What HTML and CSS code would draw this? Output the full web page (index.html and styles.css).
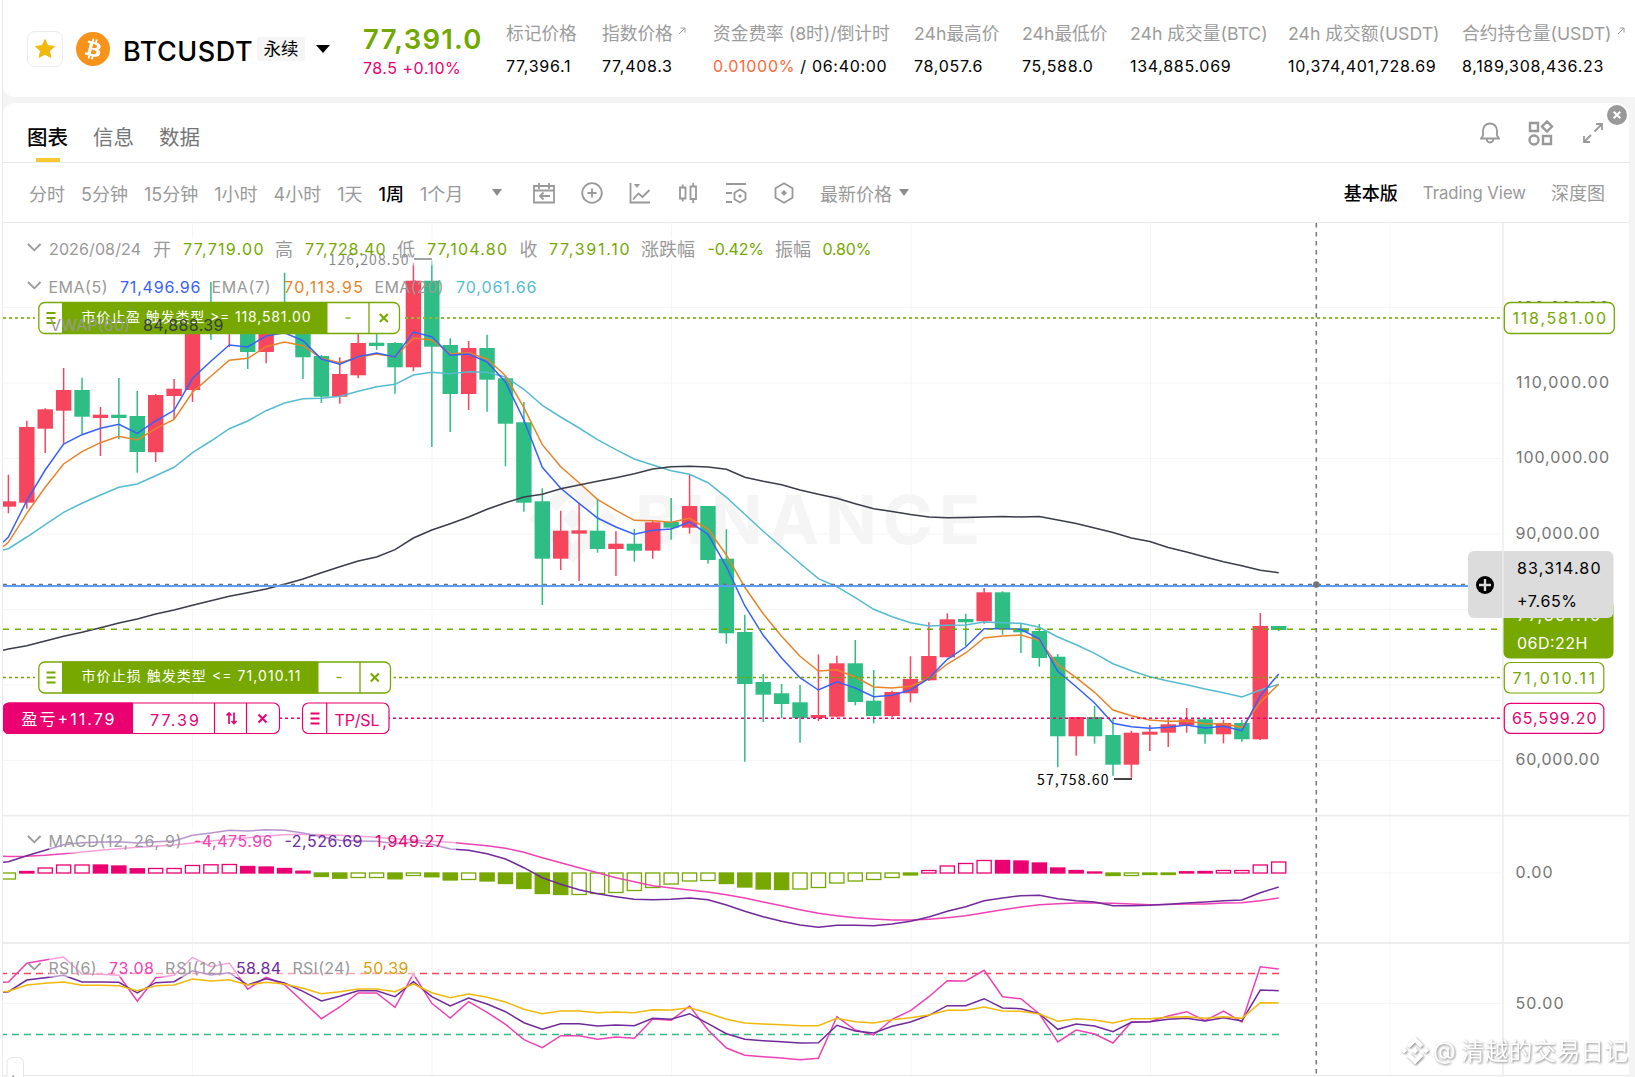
FILE: index.html
```html
<!DOCTYPE html>
<html lang="zh-CN">
<head>
  <meta charset="UTF-8" />
  <meta name="viewport" content="width=device-width, initial-scale=1.0" />
  <title>BTCUSDT 永续</title>
  <link rel="stylesheet" href="styles.css">
</head>
<body>
  <div class="page">

    <header class="ticker">
      <button class="star">
        <svg width="22" height="22" viewBox="0 0 22 22"><path d="M11 1.600l2.800 6 6.600.8-4.900 4.500 1.300 6.500-5.800-3.200-5.800 3.200 1.300-6.500L1.600 8.400l6.600-.8z" fill="#f0b90b" stroke="#f0b90b" stroke-linejoin="round"/></svg>
      </button>
      <svg class="coin" width="34" height="34" viewBox="0 0 32 32">
        <circle cx="16" cy="16" r="16" fill="#f7931a"/>
        <path fill="#fff" d="M23.189 14.020c.314-2.096-1.283-3.223-3.465-3.975l.708-2.840-1.728-.43-.690 2.765c-.454-.114-.920-.220-1.385-.326l.695-2.783L15.596 6l-.708 2.839c-.376-.086-.746-.170-1.104-.260l.002-.009-2.384-.595-.460 1.846s1.283.294 1.256.312c.700.175.826.638.805 1.006l-.806 3.235c.048.012.110.030.180.057l-.183-.045-1.130 4.532c-.086.212-.303.531-.793.410.018.025-1.256-.313-1.256-.313l-.858 1.978 2.250.561c.418.105.828.215 1.231.318l-.715 2.872 1.727.430.708-2.840c.472.127.930.245 1.378.357l-.706 2.828 1.728.430.715-2.866c2.948.558 5.164.333 6.097-2.333.752-2.146-.037-3.385-1.588-4.192 1.130-.260 1.980-1.003 2.207-2.538zm-3.950 5.538c-.533 2.147-4.148.986-5.320.695l.950-3.805c1.172.293 4.929.872 4.370 3.110zm.535-5.569c-.487 1.953-3.495.960-4.470.717l.860-3.450c.975.243 4.118.696 3.610 2.733z"/>
      </svg>
      <h1>BTCUSDT</h1>
      <span class="badge">永续</span>
      <span class="caret caret-dark"></span>
      <div class="last">
        <strong>77,391.0</strong>
        <span>78.5 +0.10%</span>
      </div>
      <dl class="stats">
        <div><dt>标记价格</dt><dd>77,396.1</dd></div>
        <div><dt>指数价格<svg class="ext" viewBox="0 0 8 8"><path d="M1 7L7 1M2.500 1H7V5.500"/></svg></dt><dd>77,408.3</dd></div>
        <div><dt>资金费率 (8时)/倒计时</dt><dd><em>0.01000%</em> / 06:40:00</dd></div>
        <div><dt>24h最高价</dt><dd>78,057.6</dd></div>
        <div><dt>24h最低价</dt><dd>75,588.0</dd></div>
        <div><dt>24h 成交量(BTC)</dt><dd>134,885.069</dd></div>
        <div><dt>24h 成交额(USDT)</dt><dd>10,374,401,728.69</dd></div>
        <div><dt>合约持仓量(USDT)<svg class="ext" viewBox="0 0 8 8"><path d="M1 7L7 1M2.500 1H7V5.500"/></svg></dt><dd>8,189,308,436.23</dd></div>
      </dl>
    </header>

    <main class="panel">
      <button class="close"><svg width="20" height="20" viewBox="0 0 20 20"><circle cx="10" cy="10" r="10" fill="#999"/><path d="M6.700 6.700l6.600 6.600M13.300 6.700l-6.600 6.600" stroke="#fff" stroke-width="2"/></svg></button>
      <nav class="tabs">
        <a class="active">图表</a>
        <a>信息</a>
        <a>数据</a>
        <div class="tools">
          <svg width="20" height="22" viewBox="0 0 20 22"><path d="M1 16.500h18l-2-3V8.500C17 4.500 14 1.500 10 1.500S3 4.500 3 8.500v5zM6.500 17c.3 2.300 1.700 3.500 3.500 3.500s3.200-1.200 3.500-3.500"/></svg>
          <svg width="26" height="26" viewBox="0 0 26 26" class="thick"><path d="M2 3h8v8H2zM19 1.500l5 5-5 5-5-5zM15 16h8v8h-8z"/><circle cx="6" cy="20" r="4.500"/></svg>
          <svg width="22" height="22" viewBox="0 0 22 22"><path d="M14 2h6v6M20 2l-7.500 7.500M8 20H2v-6M2 20l7-7"/></svg>
        </div>
      </nav>

      <div class="toolbar">
        <div class="intervals">
          <a>分时</a><a>5分钟</a><a>15分钟</a><a>1小时</a><a>4小时</a><a>1天</a><a class="active">1周</a><a>1个月</a>
        </div>
        <span class="caret"></span>
        <div class="icons">
          <svg viewBox="0 0 22 22"><path d="M1 4h20v16.500H1zM1 8.500h20M6 1v6M16 1v6M17 14H7M10.500 10.500L7 14l3.500 3.500"/></svg>
          <svg viewBox="0 0 22 22"><circle cx="11" cy="11" r="9.800"/><path d="M11 6.500v9M6.500 11h9"/></svg>
          <svg viewBox="0 0 22 22"><path d="M1.500 1v19.500H21M4 17.500l5.500-6 4 3.500L20.500 8"/><path class="fill" d="M5 2h6L8 6z"/></svg>
          <svg viewBox="0 0 22 22"><path d="M3 5.500h5.500v11H3zM13.500 4.500H19v12.500h-5.500zM5.700 2.500v3M5.700 16.500v3M16.200 1v3.500M16.200 17v4"/></svg>
          <svg viewBox="0 0 22 22"><path d="M1 2h20M1 11h6M1 20h6M15 7.500l5.500 3.200v6.600L15 20.500l-5.500-3.200v-6.600z"/><circle class="fill" cx="15" cy="14" r="1.600"/></svg>
          <svg viewBox="0 0 22 22"><path d="M11 1.300l8.500 4.900v9.600L11 20.700l-8.500-4.900V6.200z"/><path class="fill" d="M11 8l3 3-3 3-3-3z"/></svg>
        </div>
        <span class="price-type">最新价格</span>
        <span class="caret"></span>
        <div class="views">
          <a class="active">基本版</a><a class="tv">Trading View</a><a>深度图</a>
        </div>
      </div>

      <svg id="chart" width="1626" height="854" viewBox="3 223 1626 854"></svg>
    </main>
  </div>

  <script src="chart.js"></script>
</body>
</html>
```
FILE: styles.css
```css
* {
  box-sizing: border-box;
}
body {
  margin: 0;
  background: #fff;
  color: #000;
  font-family: Inter, "Noto Sans CJK SC", sans-serif;
  overflow: hidden;
}
button {
  background: none;
  border: none;
  padding: 0;
}
.page {
  margin-left: 2px;
  height: 1077px;
  border-left: 1px solid #eaeaea;
  background: #f4f4f4;
}

/* ticker */
.ticker {
  display: flex;
  align-items: center;
  height: 97px;
  padding-left: 24px;
  background: #fff;
  border-radius: 0 0 0 12px;
}
.star {
  width: 36px;
  height: 36px;
  border: 1px solid #ececec;
  border-radius: 8px;
  display: flex;
  align-items: center;
  justify-content: center;
}
.coin {
  margin-left: 13px;
}
.coin + h1 {
  margin: 6px 0 0 13px;
  width: 133px;
  font-size: 27px;
  font-weight: 500;
  letter-spacing: 0.5px;
  line-height: 32px;
}
.badge {
  width: 48px;
  height: 24px;
  margin-left: 1px;
  background: #f5f5f5;
  border-radius: 3px;
  font-size: 17.5px;
  line-height: 23px;
  text-align: center;
}
.caret {
  border: 5.5px solid transparent;
  border-top: 7px solid #8c8c8c;
  border-bottom: none;
}
.caret-dark {
  border-width: 8px 7px 0;
  border-top-color: #000;
  margin-left: 11px;
}
.last {
  width: 143px;
  margin-left: 33px;
  padding-top: 6px;
}
.last strong {
  display: block;
  color: #70a800;
  font-size: 27.5px;
  font-weight: 600;
  letter-spacing: 1.25px;
  line-height: 32px;
}
.last span {
  display: block;
  color: #ea0070;
  font-size: 16px;
  letter-spacing: 0.5px;
  line-height: 26px;
  white-space: nowrap;
}
.stats {
  display: grid;
  grid-template-columns: 96px 111px 201px 108px 108px 158px 174px 170px;
  margin: 0;
  padding-top: 3px;
  white-space: nowrap;
}
.stats dt {
  color: #9c9c9c;
  font-size: 17.7px;
  line-height: 26px;
}
.stats dd {
  margin: 6px 0 0;
  font-size: 16px;
  letter-spacing: 0.7px;
  line-height: 26px;
}
.stats em {
  color: #ff6838;
  font-style: normal;
}
.ext {
  width: 8px;
  height: 8px;
  margin-left: 5px;
  vertical-align: 5px;
  fill: none;
  stroke: #9c9c9c;
}

/* chart panel */
.panel {
  position: relative;
  width: 1626px;
  height: 974px;
  margin-top: 6px;
  background: #fff;
  border-radius: 12px 12px 0 0;
}
.close {
  position: absolute;
  top: 2px;
  right: 2px;
  width: 20px;
  height: 20px;
}
.close svg {
  display: block;
}
.tabs {
  display: flex;
  height: 60px;
  padding-left: 24px;
  gap: 25px;
  border-bottom: 1px solid #eaeaea;
}
.tabs a {
  width: 41px;
  color: #757575;
  font-size: 20.5px;
  line-height: 70px;
}
.tabs .active {
  color: #000;
  font-weight: 500;
  background: linear-gradient(#f8c933, #f8c933) center bottom / 24px 4px no-repeat;
}
.tools {
  display: flex;
  align-items: center;
  gap: 28px;
  margin: 0 25px 0 auto;
}
.tools svg {
  fill: none;
  stroke: #999;
  stroke-width: 1.8;
}
.tools .thick {
  stroke-width: 2.4;
}
.toolbar {
  display: flex;
  align-items: center;
  height: 60px;
  padding: 0 24px 0 26px;
  border-bottom: 1px solid #eaeaea;
  color: #999;
  font-size: 18px;
}
.intervals {
  display: flex;
  gap: 16px;
  width: 463px;
  white-space: nowrap;
}
.toolbar .active {
  color: #000;
  font-weight: 500;
}
.icons {
  display: flex;
  gap: 26px;
  margin: 0 25px 0 31px;
}
.icons svg {
  width: 22px;
  height: 22px;
  fill: none;
  stroke: #999;
  stroke-width: 1.8;
}
.icons .fill {
  fill: #999;
  stroke: none;
}
.price-type {
  width: 79px;
}
.views {
  display: flex;
  gap: 25px;
  margin-left: auto;
}
.views .tv {
  font-size: 16.7px;
  line-height: 28px;
}

/* chart */
#chart {
  display: block;
  font-size: 16px;
}
#chart .mark {
  font-family: "Noto Sans CJK SC", sans-serif;
  font-size: 14px;
}
#chart .brand {
  font-size: 68px;
  font-weight: 700;
}
#chart .sign {
  font-size: 23.5px;
  filter: drop-shadow(1px 1px 1px #888);
}
#chart .small {
  font-size: 14px;
}
#chart .cjk {
  font-size: 18px;
}
```
FILE: chart.js
```js
const chart = document.getElementById("chart");
const UP = "#f6465d", DOWN = "#2ebd85", GREEN = "#76a800", PINK = "#ea0070";
const LEFT = 3, AXIS = 1503;
const X0 = 8.4, STEP = 18.41;
const px = i => X0 + i * STEP;

let out = "";
const rect = (x, y, w, h, fill, extra = "") => out += `<rect x="${x}" y="${y}" width="${w}" height="${h}" fill="${fill}" ${extra}/>`;
const line = (x1, y1, x2, y2, color, w = 1, dash = "") => out += `<path d="M${x1} ${y1}L${x2} ${y2}" stroke="${color}" stroke-width="${w}" stroke-dasharray="${dash}" fill="none"/>`;
const path = (d, color, w = 1.5, fill = "none") => out += `<path d="${d}" stroke="${color}" stroke-width="${w}" fill="${fill}"/>`;
// text between two x positions
const text = (x1, x2, y, str, color, cls = "") => out += `<text x="${x1}" y="${y}" fill="${color}" class="${cls}" textLength="${x2 - x1}">${str.replace(/</g, "&lt;")}</text>`;

function series(start, ys, color, w = 1.5) {
  const pts = ys.map((y, i) => `${px(i).toFixed(1)} ${y}`);
  path(`M${LEFT} ${start}L` + pts.join("L"), color, w);
}

// [direction, high, top, bottom, low]
const candles = [
  [1,474.7,501.3,506.7,513.3],[1,420.7,427,502.7,508.7],[1,408.3,409.3,428.7,453],[1,368,390,410.7,444],[0,377.7,390,416.7,434.3],
  [1,407,414.7,418,456],[0,378,414.7,418,439],[0,391,416,452,472.7],[1,394,395,452.3,462],[1,379,388.7,396,419],
  [1,318,322,390,402],[0,282,305,328,339.7],[1,306,310,330,347],[0,308,310,352,369],[1,310,315,352,363.3],
  [0,272.7,310,325,330],[0,315,320,357.3,379],[0,355,356,396.7,403],[1,357.3,374,396.7,403.7],[1,325,343,375.3,378.3],
  [0,325,342.7,346,350],[0,342,343,367.3,393.7],[1,262.7,280.7,367.3,371.3],[0,260.7,280.7,346.7,447],[0,338.3,345,394,432],
  [1,341,348,394,410],[0,334.7,348,379.7,411.7],[0,376.7,378.3,423.7,466.3],[0,402,422.3,502.7,511.7],[0,488.3,501.3,558.7,605],
  [1,510.7,530.7,558.7,570],[1,502.7,530.3,533.7,581],[0,499.3,530.7,549,552.7],[1,531.3,543.7,549,576],[0,529,543.7,550.7,561.7],
  [1,521,522.3,550.7,558.7],[0,498,522,527.7,539.7],[1,475,506,527.7,533.7],[0,506,506,560,563.7],[0,529.3,558.7,633.3,643.7],
  [0,614.7,632,684,761.7],[0,674,682,694.7,722],[0,684,693.3,704,718],[0,685,702.3,718,742.7],[1,654.3,715,718,721],
  [1,655.7,663.3,716.7,717.3],[0,640,663.3,702,705.3],[0,670,700.7,716,723.3],[1,690.7,692,716,717],[1,656.3,679,693.3,702.3],
  [1,622.3,656,680.3,681],[1,613.3,619.3,657.3,657.3],[0,613.7,619,622.3,646],[1,588,592.3,621.3,623.7],[0,591.3,592.3,629,634.7],
  [0,624,628.3,632.3,653],[0,624,631,658,666.7],[0,654,656.7,736.3,767.3],[1,717,717,736.3,755.7],[0,705.7,717,736.3,743.7],
  [0,718.3,735,764.7,775.7],[1,730.7,732.7,764.7,777.7],[1,725,731.7,734.7,751],[1,717.7,724.3,732.7,747],[1,708,719.3,725,732.7],
  [0,718,719.3,734.3,743.7],[1,719.7,723,734.3,743.3],[0,720,723,739.3,741.7],[1,613,626,739.3,740],[0,626,626,630,631]
];

const ema5 = [537,500.7,470,444,434.7,428.3,424.3,433.3,421,410.3,378.3,361.3,345,347,336,332.7,340.7,359,364.3,356.7,353,357,332,336.7,355.3,354,362,382,420,467.3,488.3,503.3,518,527,534.3,530.3,529,522,534.3,566.7,605.7,635.3,658,677.7,690,681.7,688,696.7,695.3,690,678.3,659.3,647,628.7,628.7,629.3,639,671.3,686.7,703,723.3,726.7,728.3,727.3,725,728,726.3,730.7,695.7,674];
const ema7 = [542.3,513.3,487.3,464,451.7,442.7,436.3,440,428.7,419.3,392.3,376.3,360.3,358.3,346.7,342,345.7,358.3,362.7,357.3,354,357,338.3,340,353.7,352.7,359,375.7,407.7,444.7,466.7,482.7,499.3,510.3,520.3,520.7,522.3,518.3,529,555,587.3,613.7,636.3,656.3,671,669.7,677,687,688,686.3,678.3,664,653,638,636,635,640.3,664.7,677.7,692.3,710,715.7,720,721.3,721,723.7,723.7,727.3,702.3,684.3];
const ema20 = [548.7,537,524.7,512.3,503.3,495,487.3,484,475.7,467.3,452.7,441,428.7,421,410.7,403,398.7,398.3,396.3,391.3,386.7,384.3,375,372.3,373.7,371.7,372.3,377,389.3,405.3,417,428,439.7,449.7,459,465,470.7,474.3,482.7,497.3,514.3,531.3,547.3,563.3,578.7,586.7,597.7,609.3,616.7,622.7,626,625.3,625,622,622.7,623.3,627.3,637,644.7,653.3,663.7,670.7,676.7,681,684.7,689,692.7,697,690,684.3];
const vwap = [649,645.7,641,636.3,632.3,627.7,623,619,614,610,605.3,600.7,596.3,592.7,589,584.3,579,572.7,566.7,561,557,549.7,538,530,523.7,517,509.3,502.7,497,494.3,488.7,485,481.3,477.7,473.7,469,466.7,466.3,467,469.3,477.3,481.3,484.7,490,494.3,498.3,503.7,508.7,511.5,514.5,517,517.8,517.5,517,516.5,517,516.5,520,523.5,528,532.5,538,541.5,547.5,552,557,561.7,565.7,570.3,572.7];

// [value, filled]
const macdBars = [
  [-6.5,0],[2,1],[5.5,0],[8.5,0],[8.5,0],[8.5,1],[7.5,1],[4.7,1],[5,0],[5,0],[8,0],[8.7,0],[9,0],[7,1],[6.5,1],[5,1],[2.3,1],
  [-4,1],[-5.7,1],[-5,0],[-5,0],[-6.3,1],[-3,0],[-4.3,1],[-7.5,1],[-7,0],[-8.5,1],[-11,1],[-16,1],[-21,1],[-22,1],[-22,0],[-21,0],
  [-20,0],[-18,0],[-15,0],[-11.5,0],[-8.5,0],[-8,0],[-11,1],[-14.5,1],[-16.5,1],[-17,1],[-16.5,0],[-15,0],[-10.5,0],[-8.5,0],[-7,0],[-5,0],[-2.5,1],
  [3,0],[7.5,0],[10,0],[13,0],[13,1],[12.5,1],[10.5,1],[5.5,1],[3,1],[1.5,1],[-3,1],[-3,0],[-2,1],[-2,1],[1.7,1],[2,1],[3,0],[3,0],[8.5,0],[11.5,0]
];
const dea = [856.5,856.3,855.3,853.7,852,850.3,848.7,847.3,846.3,845,843,841,839.3,837.7,836,834.7,834.3,834.7,835.3,836.3,837.3,838.7,840,841.3,842.3,844,845.7,848.3,852.3,857.7,862.7,867.7,872.7,877.7,881.7,885.7,888,890,892,894.7,898,902,905.7,909.7,913.3,915.7,917.7,919,920,920,919.3,917.7,915.7,912.7,909.7,907,904.7,903.7,903,903,903.3,904,904.7,904.5,904,904,903,902.7,900.7,898];
const dif = [861.7,855.7,850.3,844.7,842.7,842,841.7,843,841.7,841,835.3,833,830.3,831,829.7,830.3,833,836.7,840.3,841,841.3,843.7,842,844.3,849,850.3,853.7,859,867.7,877.7,884.3,889.7,893.7,896.7,899.3,899.7,899.3,898,899.7,905,911.3,916.7,921.3,925,927.3,925.3,925.3,925.7,924,921.3,917,911.3,906.7,900.7,898,895.7,895.3,898.7,900.7,902,905.7,905.7,905.3,904.3,903,902,900.7,900,892.7,887];
const rsi6 = [982,963.3,960,957,974,974.3,975.3,1001.3,977.7,975.3,957.3,966.7,963,989.3,977,984.7,1001.7,1018.7,1007,993,993,1007.3,974,1003.3,1018,1001.7,1012.3,1024.3,1039.7,1047.7,1035.7,1035.7,1039.3,1037,1038.3,1019,1020.3,1006,1030,1048,1055.3,1056.7,1058,1059.7,1058.3,1016.7,1030,1035,1019.3,1010.7,996.7,980.7,981,970.3,996.7,998.7,1014,1042,1030,1034,1043,1022,1021.7,1016,1011.7,1020.7,1011,1022,966.7,969];
const rsi12 = [991.7,980,977.7,975.3,982,982,982.3,993,982.7,981.7,970.7,975,972.7,985,978.7,983,991.3,1001,996.3,990.7,990.7,996.7,981.7,996.7,1006,998,1004,1011.7,1022.7,1029.3,1023.7,1023.7,1026,1025,1025.7,1018.3,1019.3,1013.7,1023.7,1033.7,1039.3,1040.7,1041.7,1043,1042.7,1025.3,1031,1033,1026.3,1022,1015.3,1005.7,1005.7,998.7,1008,1008.7,1013.7,1029.3,1024,1026,1031.7,1022.3,1021.7,1019.3,1018.3,1021,1017.7,1021,990,990.7];
const rsi24 = [991.3,985,983.3,982,985.3,985.3,985.7,990.7,985.7,985,979,981,979.7,985,982.3,984,988.3,993.7,991.7,989,989,991.7,984,992.7,997.7,994,997.3,1002,1009.3,1013.7,1011,1011,1012.7,1012,1012.7,1009.7,1010,1007.7,1013,1019.3,1023,1024,1024.7,1025.7,1025.7,1018.3,1021.7,1023,1019.7,1017.7,1015,1010.3,1010.3,1007,1011,1011.3,1014,1021.3,1018.7,1020,1023,1018.7,1018.7,1017.3,1016.7,1018.3,1016.7,1018.3,1002.7,1003];

// grid
[307.5, 383, 458.5, 534, 609.5, 685, 760.5, 873, 1003.5].forEach(y => line(LEFT, y, AXIS, y, "#f5f5f5"));
[192.5, 432, 671.5, 911, 1150.5, 1390].forEach(x => line(x, 223, x, 1075, "#f5f5f5"));

// brand mark behind candles
function logo(cx, cy, r, fill) {
  const d = (x, y, s) => `M${x} ${y - s}L${x + s} ${y}L${x} ${y + s}L${x - s} ${y}Z`;
  const s = r * 0.22, k = r * 0.6;
  out += `<path fill="${fill}" d="${d(cx, cy, s * 1.1)}${d(cx - r + s, cy, s)}${d(cx + r - s, cy, s)}
    M${cx} ${cy - r}L${cx + k} ${cy - r + k}L${cx + k - s} ${cy - r + k + s}L${cx} ${cy - r + 2 * s}L${cx - k + s} ${cy - r + k + s}L${cx - k} ${cy - r + k}Z
    M${cx} ${cy + r}L${cx + k} ${cy + r - k}L${cx + k - s} ${cy + r - k - s}L${cx} ${cy + r - 2 * s}L${cx - k + s} ${cy + r - k - s}L${cx - k} ${cy + r - k}Z"/>`;
}
logo(573, 519, 44, "#f5f5f5");
text(635, 980, 543.5, "BINANCE", "#f5f5f5", "brand");

candles.forEach(([up, h, t, b, l], i) => {
  const c = up ? UP : DOWN, x = px(i);
  line(x, h, x, l, c, 1.5);
  const left = Math.max(LEFT, x - 7.7);
  rect(left, t, x + 7.7 - left, b - t, c);
});
series(550, ema20, "#55bbd0");
series(546.7, ema7, "#e8832a");
series(542.3, ema5, "#3861fb");
series(650.3, vwap, "#3a3d48");

// macd histogram
macdBars.forEach(([v, filled], i) => {
  const c = v > 0 ? PINK : GREEN;
  const left = Math.max(LEFT - 2, px(i) - 7.1);
  const y = v > 0 ? 873.5 - v : 873;
  rect(left, y, px(i) + 7.1 - left, Math.abs(v) - 0.5, filled ? c : "#fff", `stroke="${c}" stroke-width="1.3"`);
});
series(856.3, dea, "#ee42b4");
series(862.3, dif, "#702a9c");

line(LEFT - 3, 973.5, 1279, 973.5, "#f6465d", 1.3, "7 5");
line(LEFT - 3, 1034.5, 1279, 1034.5, DOWN, 1.3, "7 5");
series(982.3, rsi6, "#ee42b4");
series(992.3, rsi12, "#702a9c");
series(991.7, rsi24, "#f0b90b", 1.6);

// price lines
line(LEFT, 584.5, 1468, 584.5, "#757575", 1.3, "4 5");
line(LEFT, 586, 1468, 586, "#5a9ef8", 2);
line(LEFT, 629.3, AXIS, 629.3, GREEN, 1.4, "6 6");
line(LEFT, 318, AXIS, 318, "#8fbb35", 2, "3 3");
line(LEFT, 677.5, AXIS, 677.5, GREEN, 1.3, "3 3");
line(LEFT, 718.3, AXIS, 718.3, PINK, 1.5, "3 3");

text(328.5, 408.5, 264.5, "126,208.50", "#111", "mark");
line(414, 259, 432, 259, "#444", 2);
text(1037, 1108.5, 785, "57,758.60", "#000", "mark");
line(1114, 779, 1132, 779, "#444", 2);

// crosshair
line(1316.3, 223, 1316.3, 1075, "#757575", 1.5, "4.5 4.5");
out += `<circle cx="1316.3" cy="584.5" r="3.2" fill="#757575"/>`;

// order tags
const cross = (x, y, c) => path(`M${x - 4} ${y - 4}l8 8M${x + 4} ${y - 4}l-8 8`, c, 2);
const handle = (x, y, c) => path(`M${x - 4.5} ${y - 5}h9M${x - 4.5} ${y}h9M${x - 4.5} ${y + 5}h9`, c, 2);

function stopTag(y, right, split, label, labelEnd) {
  rect(35, y, right - 35 + 3, 31, "#fff");
  rect(38.8, y + .5, right - 38.8, 31, "#fff", `rx="6" stroke="${GREEN}" stroke-width="1.3"`);
  rect(62, y, split - 62, 32, GREEN);
  line(split + 41.5, y, split + 41.5, y + 32, GREEN, 1.3);
  handle(51, y + 16, GREEN);
  text(81.5, labelEnd, y + 19.5, label, "#fff", "small");
  line(split + 18, y + 16, split + 23, y + 16, GREEN, 1.3);
  cross(split + 56.3, y + 16, GREEN);
}
stopTag(302, 399.5, 327.5, "市价止盈 触发类型 >= 118,581.00", 310.5);
stopTag(661.5, 390.5, 318.5, "市价止损 触发类型 <= 71,010.11", 300.5);

rect(3, 703, 276.5, 30.5, "#fff", `rx="6" stroke="${PINK}" stroke-width="1.2"`);
path("M132.500 703H9a6 6 0 0 0-6 6v18.500a6 6 0 0 0 6 6h123.500z", PINK, 1, PINK);
line(214.5, 703, 214.5, 733.5, PINK, 1.2);
line(246.5, 703, 246.5, 733.5, PINK, 1.2);
text(21.5, 114.5, 724.5, "盈亏+11.79", "#fff");
text(150, 199, 726, "77.39", PINK);
path("M229 724v-11M226.500 715.500l2.500-2.500 2.500 2.500M234 712.500v11M231.500 721l2.500 2.500 2.500-2.500", PINK, 1.7);
cross(262.5, 718.5, PINK);
rect(302.5, 703, 86.5, 30.5, "#fff", `rx="6" stroke="${PINK}" stroke-width="1.2"`);
line(326.7, 703, 326.7, 733.5, PINK, 1.2);
handle(315, 718.5, PINK);
text(334.5, 379.5, 726, "TP/SL", PINK);

// pane separators and axis
line(AXIS, 223, AXIS, 1075, "#ededed", 1.5);
[815.7, 943, 1075.7].forEach(y => line(LEFT, y, 1629, y, "#ededed", 1.8));
[[120, 312.5], [110, 388], [100, 463.2]].forEach(([v, y]) => text(1516, 1609, y, v + ",000.00", "#757575"));
text(1515.5, 1599.5, 539, "90,000.00", "#757575");
text(1515.5, 1599.5, 765, "60,000.00", "#757575");
text(1515.5, 1552.5, 878, "0.00", "#757575");
text(1515.5, 1563.5, 1009, "50.00", "#757575");

// axis tags
rect(1504.3, 302.5, 110, 31, "#fff", `rx="6" stroke="${GREEN}" stroke-width="1.3"`);
text(1512.5, 1606, 323.7, "118,581.00", GREEN);
rect(1504.3, 662.5, 99.5, 30.5, "#fff", `rx="6" stroke="${GREEN}" stroke-width="1.2"`);
text(1512.5, 1595, 683.7, "71,010.11", GREEN);
rect(1504.3, 703.3, 99.5, 30, "#fff", `rx="6" stroke="${PINK}" stroke-width="1.2"`);
text(1512, 1596.5, 723.7, "65,599.20", PINK);
rect(1503.5, 600, 110, 58.5, GREEN, `rx="6"`);
text(1517, 1600, 621, "77,391.10", "#fff");
text(1517, 1587.5, 648.5, "06D:22H", "#fff");
rect(1468, 551, 145.5, 67, "#dcdcdc", `rx="6"`);
line(AXIS, 551, AXIS, 618, "#ededed", 1.5);
out += `<circle cx="1485" cy="585" r="9" fill="#000"/>`;
path("M1479 585h12M1485 579v12", "#dcdcdc", 2.4);
text(1517, 1600.5, 574, "83,314.80", "#000");
text(1517, 1577, 607, "+7.65%", "#000");

// legends
const chevron = y => path(`M28 ${y}l6.300 6.300 6.300-6.300`, "#999", 1.8);
rect(49, 236, 823, 29.5, "#fff", `opacity=".5"`);
rect(49, 827, 407, 26, "#fff", `opacity=".5"`);
rect(49, 951, 371, 26, "#fff", `opacity=".5"`);
[244, 282, 836, 963].forEach(chevron);

const G = "#999";
[
  [49, 141, "2026/08/24", G], [183, 263.5, "77,719.00", GREEN], [305, 385.5, "77,728.40", GREEN],
  [427, 507, "77,104.80", GREEN], [549, 629.5, "77,391.10", GREEN], [707.5, 764, "-0.42%", GREEN], [822.5, 871.5, "0.80%", GREEN]
].forEach(([a, b, s, c]) => text(a, b, 255, s, c));
[
  [153, 171, "开"], [275, 293, "高"], [397, 415, "低"], [519.5, 537.5, "收"], [641, 695, "涨跌幅"], [775, 811, "振幅"]
].forEach(([a, b, s]) => text(a, b, 255.5, s, G, "cjk"));
[
  [48.5, 107.5, "EMA(5)", G], [120, 200.5, "71,496.96", "#3861fb"], [211.5, 270.5, "EMA(7)", G],
  [284, 363, "70,113.95", "#e8832a"], [374.5, 443.5, "EMA(20)", G], [456, 536.5, "70,061.66", "#55bbd0"]
].forEach(([a, b, s, c]) => text(a, b, 293, s, c));
text(50, 130, 331, "VWAP(60)", G);
text(143, 223.5, 331, "84,888.39", "#3a3d48");
[
  [48.5, 181.5, "MACD(12, 26, 9)", G], [194, 272.5, "-4,475.96", "#ee42b4"],
  [284.5, 362.5, "-2,526.69", "#702a9c"], [375, 444, "1,949.27", PINK]
].forEach(([a, b, s, c]) => text(a, b, 846.7, s, c));
[
  [48.5, 96.5, "RSI(6)", G], [109, 154, "73.08", "#ee42b4"], [165, 223.5, "RSI(12)", G],
  [236, 281, "58.84", "#702a9c"], [292.5, 350.5, "RSI(24)", G], [363, 408.5, "50.39", "#d9a00a"]
].forEach(([a, b, s, c]) => text(a, b, 973.7, s, c));

rect(7, 1057.5, 16.5, 30, "#fff", `rx="5" stroke="#e6e6e6"`);
rect(12.5, 1075.5, 1.5, 1.5, "#888");

// author signature
out += `<g class="sign">`;
logo(1415, 1050.5, 14, "#fff");
text(1433, 1455, 1058.5, "@", "#fff");
text(1461, 1628, 1060, "清越的交易日记", "#fff");
out += `</g>`;

chart.innerHTML = out;
```
